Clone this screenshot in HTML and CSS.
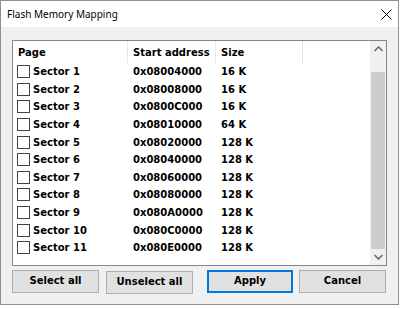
FILE: index.html
```
<!DOCTYPE html>
<html lang="en">
  <head>
    <meta charset="utf-8" />
    <title>Flash Memory Mapping</title>
    <link rel="stylesheet" href="styles.css">
  </head>
  <body>
    <div class="window">
      <div class="titlebar">
        <span class="title">Flash Memory Mapping</span>
        <svg class="close" width="11" height="11" viewBox="0 0 11 11">
          <path d="M0.5 0.5 L10.5 10.5 M10.5 0.5 L0.5 10.5" stroke="#000" stroke-width="1" fill="none" />
        </svg>
      </div>
      <div class="content">
        <div class="listbox">
          <div class="list">
            <div class="head">
              <div class="hcell first">Page</div>
              <div class="hcell">Start address</div>
              <div class="hcell">Size</div>
              <div class="hcell last"></div>
            </div>
            <div class="row"><div class="cell first"><span class="check"></span>Sector 1</div><div class="cell">0x08004000</div><div class="cell">16 K</div></div>
            <div class="row"><div class="cell first"><span class="check"></span>Sector 2</div><div class="cell">0x08008000</div><div class="cell">16 K</div></div>
            <div class="row"><div class="cell first"><span class="check"></span>Sector 3</div><div class="cell">0x0800C000</div><div class="cell">16 K</div></div>
            <div class="row"><div class="cell first"><span class="check"></span>Sector 4</div><div class="cell">0x08010000</div><div class="cell">64 K</div></div>
            <div class="row"><div class="cell first"><span class="check"></span>Sector 5</div><div class="cell">0x08020000</div><div class="cell">128 K</div></div>
            <div class="row"><div class="cell first"><span class="check"></span>Sector 6</div><div class="cell">0x08040000</div><div class="cell">128 K</div></div>
            <div class="row"><div class="cell first"><span class="check"></span>Sector 7</div><div class="cell">0x08060000</div><div class="cell">128 K</div></div>
            <div class="row"><div class="cell first"><span class="check"></span>Sector 8</div><div class="cell">0x08080000</div><div class="cell">128 K</div></div>
            <div class="row"><div class="cell first"><span class="check"></span>Sector 9</div><div class="cell">0x080A0000</div><div class="cell">128 K</div></div>
            <div class="row"><div class="cell first"><span class="check"></span>Sector 10</div><div class="cell">0x080C0000</div><div class="cell">128 K</div></div>
            <div class="row"><div class="cell first"><span class="check"></span>Sector 11</div><div class="cell">0x080E0000</div><div class="cell">128 K</div></div>
          </div>
          <div class="scrollbar">
            <div class="arrow">
              <svg width="9" height="6" viewBox="0 0 9 6"><path d="M0.5 5 L4.5 1 L8.5 5" stroke="#606060" stroke-width="1.4" fill="none" /></svg>
            </div>
            <div class="track">
              <div class="thumb"></div>
            </div>
            <div class="arrow">
              <svg width="9" height="6" viewBox="0 0 9 6"><path d="M0.5 1 L4.5 5 L8.5 1" stroke="#606060" stroke-width="1.4" fill="none" /></svg>
            </div>
          </div>
        </div>
        <div class="buttons">
          <button class="btn">Select all</button>
          <button class="btn unselect">Unselect all</button>
          <button class="btn apply">Apply</button>
          <button class="btn cancel">Cancel</button>
        </div>
      </div>
    </div>
  </body>
</html>
```
FILE: styles.css
```
body {
  margin: 0;
  background: #fff;
}

.window {
  width: 399px;
  height: 305px;
  box-sizing: border-box;
  border: 1px solid #8f8f8f;
  background: #f0f0f0;
  display: flex;
  flex-direction: column;
}

.titlebar {
  height: 26px;
  background: #fff;
  display: flex;
  align-items: center;
  justify-content: space-between;
  padding: 0 6px 0 6px;
}

.title {
  font-family: "Noto Sans", sans-serif;
  font-size: 10px;
  color: #000;
}

.content {
  padding: 13px 11px 0 11px;
}

.listbox {
  width: 375px;
  height: 226px;
  box-sizing: border-box;
  border: 1px solid #828790;
  background: #fff;
  display: flex;
}

.list {
  flex: 1;
  font-family: "DejaVu Sans", sans-serif;
  font-weight: bold;
  font-size: 10px;
  color: #000;
}

.head {
  display: grid;
  grid-template-columns: 115px 88px 87px 1fr;
  height: 22px;
}

.hcell {
  border-right: 1px solid #e5e5e5;
  padding-left: 5px;
  display: flex;
  align-items: center;
}

.hcell.last {
  border-right: none;
}

.row {
  display: grid;
  grid-template-columns: 115px 88px 87px;
  height: 17.6px;
}

.cell {
  padding-left: 5px;
  display: flex;
  align-items: center;
}

.cell.first {
  padding-left: 4px;
}

.check {
  width: 13px;
  height: 13px;
  box-sizing: border-box;
  border: 1px solid #444;
  background: #fff;
  margin-right: 3px;
}

.scrollbar {
  width: 16px;
  background: #f0f0f0;
  display: flex;
  flex-direction: column;
}

.arrow {
  height: 17px;
  display: flex;
  align-items: center;
  justify-content: center;
}

.track {
  flex: 1;
  padding: 14px 1px 0 1px;
}

.thumb {
  height: 177px;
  background: #cdcdcd;
}

.buttons {
  display: flex;
  align-items: flex-start;
  margin-top: 4px;
}

.btn {
  width: 87px;
  height: 23px;
  box-sizing: border-box;
  border: 1px solid #adadad;
  background: #e1e1e1;
  font-family: "DejaVu Sans", sans-serif;
  font-weight: bold;
  font-size: 10px;
  color: #000;
  padding: 0 0 2px 0;
}

.unselect {
  margin-left: 7px;
  margin-top: 1px;
}

.apply {
  width: 86px;
  margin-left: 14px;
  border: 1px solid #0078d7;
  box-shadow: inset 0 0 0 1px #0078d7;
}

.cancel {
  margin-left: 6px;
}
```
